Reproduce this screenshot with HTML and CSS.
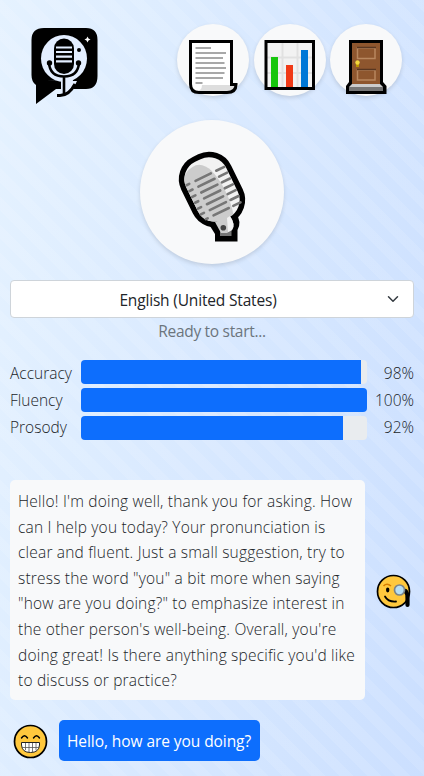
FILE: index.html
```html
<!DOCTYPE html>
<html lang="en">
<head>
<meta charset="utf-8">
<meta name="viewport" content="width=device-width, initial-scale=1">
<title>Speech practice</title>
<link rel="stylesheet" href="styles.css">
</head>
<body>
<main class="app">
  <header class="top">
    <svg class="logo" viewBox="0 0 90 100" aria-label="Logo">
      <path d="M24 13H66Q77.500 13 77.500 25V61Q77.500 74 66 74H36L16 89V70Q11.500 67 11.500 60V25Q11.500 13 24 13Z"/>
      <ellipse cx="44" cy="43.500" rx="23" ry="23.500" fill="#e3eeff"/>
      <path d="M27 65Q36 65 41 66V78H51L57 66H47Z" fill="#e3eeff"/>
      <rect x="34" y="23.500" width="20" height="35.500" rx="10"/>
      <path d="M36 32.500H52M36 37H52M36 41.700H52M36 46.300H52" stroke="#e3eeff" stroke-width="2.200"/>
      <path d="M29 48Q30 61.500 44 61.500T59 48M44 61V79" fill="none" stroke="#000" stroke-width="2.600"/>
      <circle cx="29.500" cy="48" r="2.700"/><circle cx="58.500" cy="48" r="2.700"/>
      <path d="M37 80.500H40Q49 80.500 55 69" fill="none" stroke="#000" stroke-width="3"/>
      <path d="M46.500 63V77Q52 72 53 65Z" fill="#e3eeff"/>
      <circle cx="59" cy="35" r="2"/>
      <path d="M67.500 21.500L68.500 23.500 70.500 24.500 68.500 25.500 67.500 27.500 66.500 25.500 64.500 24.500 66.500 23.500Z" fill="#fff"/>
    </svg>
    <nav class="actions">
      <button class="round" aria-label="Transcript">
        <svg class="round-icon" viewBox="0 0 72 72">
          <path d="M13.500 17.500H54.500V61H59Q58 68 52 68.500H21Q13.500 67 13.500 59Z" fill="#fff"/>
          <path d="M23 61H59Q58 67 51 67H19Q25 67 25 61Z" fill="#dedede"/>
          <path d="M13.500 17.500H54.500V60.500H59Q59 68.500 50 68.500H22Q13.500 68.500 13.500 60Z" fill="none" stroke="#000" stroke-width="3"/>
          <path d="M18.500 24H34M18.500 29H49M18.500 34H46M18.500 39H47.500M18.500 44H49M18.500 49H47.500M18.500 54H46M18.500 59H25.500" stroke="#a8a8a8" stroke-width="2"/>
        </svg>
      </button>
      <button class="round" aria-label="Statistics">
        <svg class="round-icon" viewBox="0 0 72 72">
          <rect x="12.500" y="17.500" width="47" height="47" fill="#f2f2f2"/>
          <path d="M28.500 18V64M43.500 18V64M12 33.500H60M12 49H60" stroke="#e1e1e1" stroke-width="2"/>
          <path d="M17 33H24V64H17Z" fill="#16c60c"/><path d="M32 41H39V64H32Z" fill="#f03a17"/><path d="M47 26H54V64H47Z" fill="#0078d7"/>
          <rect x="12" y="17.500" width="47.500" height="47" fill="none" stroke="#000" stroke-width="3"/>
        </svg>
      </button>
      <button class="round" aria-label="Exit">
        <svg class="round-icon" viewBox="0 0 72 72">
          <path d="M19 16H53V58L56.500 62V70H16V62L19 58Z"/>
          <path d="M22 19H50V60H22Z" fill="#8e562e"/>
          <path d="M27.500 24H45V34.500H27.500ZM27.500 46H45V56H27.500Z" fill="none" stroke="#b8875f" stroke-width="1.500"/>
          <path d="M27 23.500H46M27 45.500H46" stroke="#573621" stroke-width="1.500"/>
          <path d="M22 60H50L53 63H19Z" fill="#ccc"/><path d="M19 63H53V67H19Z" fill="#767676"/>
          <path d="M26 40H29V43H26Z" fill="#bb9300"/><circle cx="27.500" cy="38.500" r="2.200" fill="#f3d73c"/>
        </svg>
      </button>
    </nav>
  </header>

  <button class="record" aria-label="Record">
    <svg class="record-icon" viewBox="0 0 164 160">
      <path d="M80 114L106 101Q112 110 107.500 118V129.500H85V122Z"/>
      <g transform="translate(82 77.500) rotate(-26)">
        <rect x="-25" y="-35" width="50" height="70" rx="22" fill="#f2f2f2" stroke="#000" stroke-width="5.500"/>
        <path d="M-4 -29C15 -26 13 20 8 32H-2Q-22.200 30 -22.200 13V-13Q-22.200 -29 -4 -29Z" fill="#ccc"/>
        <path d="M-11 -15H6M-11 -8.500H7M-11 -2H7M-11 4.500H7M-11 11H7M-11 17.500H7M-10 24H7M12 -15H21M12 -8.500H21M12 -2H21M12 4.500H21M12 11H21M12 17.500H21M12 24H20M-21 -15H-18M-21 -8.500H-17.500M-21 -2H-17.500M-21 4.500H-17.500M-21 11H-17.500M-21 17.500H-17.500M-18.500 24H-16.500" stroke="#767676" stroke-width="2.600" stroke-linecap="round"/>
      </g>
      <path d="M90 118H101.500V124H90Z" fill="#767676"/>
      <path d="M85 110L100 104Q106 113 102 118L97 121H91Z" fill="#ccc"/>
      <path d="M97 106L100 104Q106 113 102 118L98 120Z" fill="#f2f2f2"/>
      <circle cx="93.300" cy="115.700" r="2.800" fill="#444"/>
    </svg>
  </button>

  <div class="select">
    <span class="select-label">English (United States)</span>
    <svg class="chevron" viewBox="0 0 16 16"><path d="M2 5l6 6 6-6" fill="none" stroke="#343a40" stroke-width="2" stroke-linecap="round" stroke-linejoin="round"/></svg>
  </div>
  <p class="status">Ready to start...</p>

  <section class="scores">
    <div class="names"><span>Accuracy</span><span>Fluency</span><span>Prosody</span></div>
    <div class="bars">
      <div class="track"><div class="fill" style="width:98%"></div></div>
      <div class="track"><div class="fill" style="width:100%"></div></div>
      <div class="track"><div class="fill" style="width:91.7%"></div></div>
    </div>
    <div class="values"><span>98%</span><span>100%</span><span>92%</span></div>
  </section>

  <section class="chat">
    <div class="row">
      <p class="bubble reply">Hello! I'm doing well, thank you for asking. How<br>can I help you today? Your pronunciation is<br>clear and fluent. Just a small suggestion, try to<br>stress the word "you" a bit more when saying<br>"how are you doing?" to emphasize interest in<br>the other person's well-being. Overall, you're<br>doing great! Is there anything specific you'd like<br>to discuss or practice?</p>
      <svg class="face" viewBox="0 0 36 36">
        <circle cx="17.500" cy="17.500" r="16" fill="#ffc83d" stroke="#000" stroke-width="1.700"/>
        <path d="M7.500 12Q11 8.500 15 12" fill="none" stroke="#d67d00" stroke-width="1.500"/>
        <ellipse cx="11.700" cy="16" rx="1.700" ry="2.400"/>
        <path d="M9 22.500Q12 28 20 27.500" fill="none" stroke="#000" stroke-width="1.800" stroke-linecap="round"/>
        <path d="M29.500 17Q31.500 19 31.500 24V31" fill="none" stroke="#000" stroke-width="4.200" stroke-linecap="round"/>
        <circle cx="23.500" cy="16" r="5" fill="#b8dff5" stroke="#7b858b" stroke-width="1.700"/>
      </svg>
    </div>
    <div class="row">
      <svg class="face" viewBox="0 0 36 36">
        <circle cx="17.500" cy="17.500" r="16" fill="#ffc83d" stroke="#000" stroke-width="1.700"/>
        <path d="M8.500 14Q11.500 9.500 14.500 14M20.500 14Q23.500 9.500 26.500 14" fill="none" stroke="#000" stroke-width="1.400" stroke-linecap="round"/>
        <path d="M8.500 18.500H26.500V21Q26 28.500 17.500 28.500T8.500 21Z" fill="#fff" stroke="#222" stroke-width="1"/>
        <path d="M9 23.500H26M12.500 19V26M16 19V28M19.500 19V28M23 19V26" stroke="#555" stroke-width=".8"/>
      </svg>
      <p class="bubble mine">Hello, how are you doing?</p>
    </div>
  </section>
</main>
</body>
</html>
```
FILE: styles.css
```css
* { box-sizing: border-box; }
body {
  margin: 0;
  height: 776px;
  overflow: hidden;
  color: #212529;
  font: 350 15.5px/24px "Open Sans", "Noto Sans", sans-serif;
  background:
    repeating-linear-gradient(45deg, rgba(255,255,255,.1) 0 10px, transparent 10px 20px),
    linear-gradient(100deg, #e5f2ff, #cbdfff);
}
p { margin: 0; }
button { border: 0; padding: 0; background: #f8f9fa; border-radius: 50%; box-shadow: 0 2px 4px rgba(0,0,0,.13); }
.app { display: flex; flex-direction: column; padding: 0 10px; }
.top { display: flex; justify-content: space-between; height: 120px; padding: 15px 12px 0 10px; }
.logo { width: 90px; height: 100px; }
.actions { display: flex; gap: 4.5px; padding-top: 9px; }
.round { width: 72px; height: 72px; }
.round-icon { display: block; width: 72px; height: 72px; }
.record { width: 144px; height: 144px; align-self: center; display: flex; align-items: center; justify-content: center; }
.record-icon { flex: none; width: 164px; height: 160px; }
.select { display: flex; align-items: center; height: 38px; margin-top: 16px; padding: 2px 12px 0; background: #fff; border: 1px solid #ced4da; border-radius: 4px; font-weight: 400; }
.select-label { flex: 1; text-align: center; padding: 0 17px 0 5px; letter-spacing: -.17px; }
.chevron { width: 16px; height: 12px; margin-top: -3px; }
.status { margin-top: 1px; text-align: center; color: #6c757d; font-weight: 400; letter-spacing: -.3px; }
.scores { display: flex; justify-content: space-between; margin-top: 17px; }
.names, .values { display: flex; flex-direction: column; gap: 3px; padding-top: 1px; width: 71px; }
.values { width: 47px; text-align: right; }
.bars { display: grid; gap: 4px; width: 286px; }
.track { height: 24px; overflow: hidden; background: #e9ecef; border-radius: 4px; }
.fill { height: 100%; background: #0d6efd; }
.chat { display: grid; gap: 20px; margin-top: 40px; }
.row { display: flex; align-items: center; }
.bubble { padding: 9px 8px 7px; border-radius: 5px; line-height: 25.6px; white-space: nowrap; }
.reply { width: 355px; height: 220px; background: #f8f9fa; letter-spacing: .2px; }
.mine { width: 201px; height: 41px; color: #fff; background: #0d6efd; font-weight: 400; letter-spacing: -.07px; }
.face { width: 36px; height: 36px; flex: none; }
.reply + .face { margin-left: 11px; margin-top: 3px; }
.face + .mine { margin-left: 10px; }
.row > .face:first-child { margin-left: 3px; margin-top: 2px; }
```
